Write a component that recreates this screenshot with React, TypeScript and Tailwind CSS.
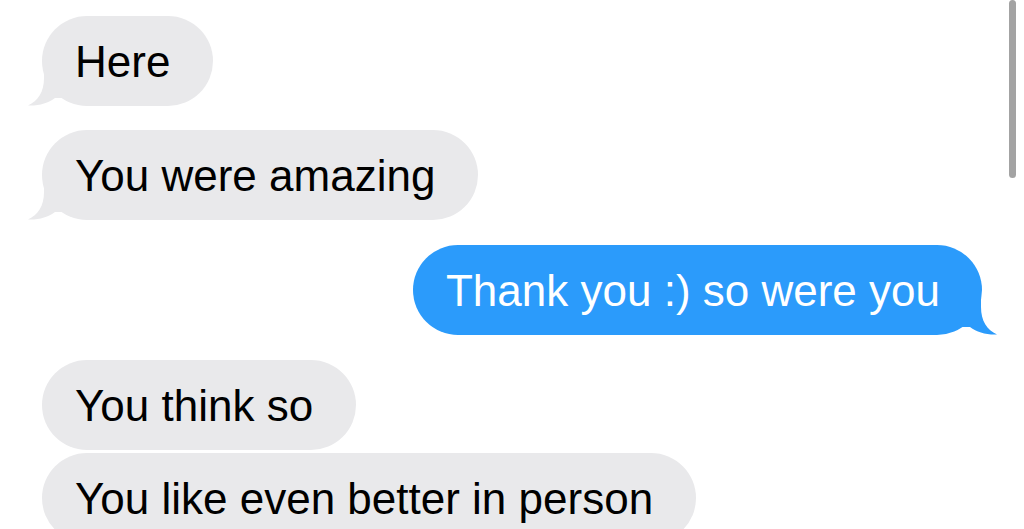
import React from "react";

const gray = "#e9e9eb";
const blue = "#2b9bfb";

function TailLeft() {
    return (
        <svg className="absolute left-[-14px] bottom-0" width="40" height="36" viewBox="0 0 40 36">
            <path d="M16 0 L16 8 C16 22 10 31 0 35.5 C11 36 20 33 27 28 L40 28 L40 0 Z" fill={gray} />
        </svg>
    );
}

function TailRight() {
    return (
        <svg className="absolute right-[-15px] bottom-0" width="40" height="36" viewBox="0 0 40 36">
            <path d="M24 0 L24 8 C24 22 30 31 40 35.5 C29 36 20 33 13 28 L0 28 L0 0 Z" fill={blue} />
        </svg>
    );
}

function Bubble({
    text,
    me = false,
    tail = false,
    className = "",
}: {
    text: string;
    me?: boolean;
    tail?: boolean;
    className?: string;
}) {
    return (
        <div
            className={
                "relative h-[90px] flex items-center rounded-[45px] pt-[2px] whitespace-nowrap " +
                (me ? "self-end bg-[#2b9bfb] text-white pl-[33px] pr-[42px] " : "self-start bg-[#e9e9eb] text-black pl-[33px] pr-[43px] ") +
                className
            }
        >
            {tail && (me ? <TailRight /> : <TailLeft />)}
            <span className="relative">{text}</span>
        </div>
    );
}

export default function App() {
    return (
        <div
            className="relative h-[529px] w-[1024px] overflow-hidden bg-white"
            style={{ fontFamily: '"Liberation Sans", Arial, sans-serif' }}
        >
            <div className="flex flex-col pt-[16px] pl-[42px] pr-[42px] text-[44px] leading-none">
                <Bubble text="Here" tail />
                <Bubble text="You were amazing" tail className="mt-[24px]" />
                <Bubble text="Thank you :) so were you" me tail className="mt-[25px]" />
                <Bubble text="You think so" className="mt-[25px]" />
                <Bubble text="You like even better in person" className="mt-[3px]" />
            </div>
            <div className="absolute right-[8px] top-0 h-[178px] w-[7px] rounded-full bg-[#a3a3a3]" />
        </div>
    );
}
